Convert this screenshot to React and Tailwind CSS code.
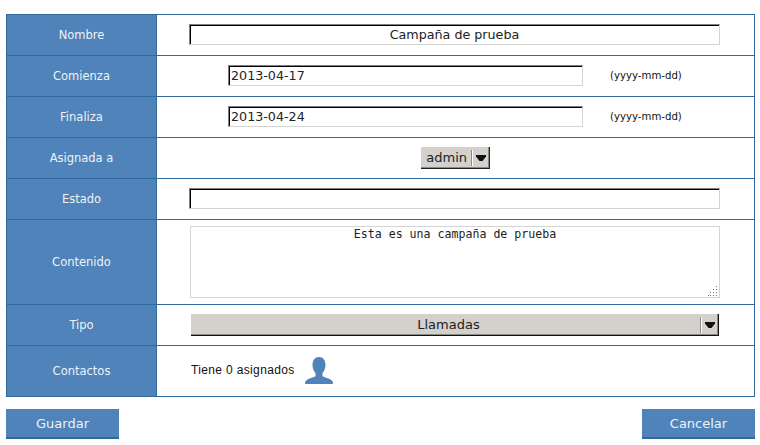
const blue = "bg-[#4f83b9]";

function Row({ label, h = "h-[41px]", last, children }) {
  return (
    <div className={`flex ${h} ${last ? "" : "border-b border-[#2f699f]"}`}>
      <div className={`w-[150px] shrink-0 ${blue} border-r border-[#2f699f] pt-[2px] flex items-center justify-center text-[11.5px] text-[#eef2f7]`}>
        {label}
      </div>
      <div className="flex-1 min-w-0 relative flex items-center">{children}</div>
    </div>
  );
}

const inset = "border border-t-[#808080] border-l-[#808080] border-r-[#d4d4d4] border-b-[#d4d4d4] shadow-[inset_1px_1px_0_#000] outline-none bg-white text-[#222] text-[12.7px] font-['DejaVu_Sans',sans-serif]";

function Arrow() {
  return (
    <span className="flex items-center h-full">
      <span className="w-[1px] h-[16px] bg-white border-l border-[#8a8a8a] box-content" />
      <span className="w-[16px] flex justify-center">
        <svg width="10" height="6" viewBox="0 0 10 6"><path d="M0 0h10v1.500L6.500 6h-3L0 1.500z" fill="#111" /></svg>
      </span>
    </span>
  );
}

function DateRow({ label, value }) {
  return (
    <Row label={label}>
      <input readOnly defaultValue={value} className={`${inset} w-[355px] h-[21px] ml-[71px] mb-[2px] px-[2px]`} />
      <span className="ml-[27px] text-[11.3px] text-[#111] font-['DejaVu_Sans_Condensed','DejaVu_Sans',sans-serif]">(yyyy-mm-dd)</span>
    </Row>
  );
}

export default function App() {
  return (
    <div className="w-[760px] h-[445px] bg-white overflow-hidden pt-[14px] pl-[6px] font-['DejaVu_Sans',sans-serif]">
      <div className="w-[749px] border border-[#2f699f]">
        <Row label="Nombre">
          <input readOnly defaultValue="Campaña de prueba" className={`${inset} w-[531px] h-[21px] ml-[32px] mb-[2px] text-center`} />
        </Row>
        <DateRow label="Comienza" value="2013-04-17" />
        <DateRow label="Finaliza" value="2013-04-24" />
        <Row label="Asignada a">
          <div className="ml-[264px] w-[69px] h-[22px] bg-[#d4d0cc] border-b border-r border-[#222] shadow-[inset_-1px_-1px_0_#8a8a8a] flex items-center justify-end text-[13px] text-[#222]">
            <span className="mr-[4px]">admin</span>
            <Arrow />
          </div>
        </Row>
        <Row label="Estado">
          <input readOnly className={`${inset} w-[531px] h-[21px] ml-[32px] mb-[2px]`} />
        </Row>
        <Row label="Contenido" h="h-[85px]">
          <div className="ml-[33px] w-[530px] h-[72px] relative border border-[#d4d4d4] text-center text-[11.6px] leading-[14px] text-[#222] font-['DejaVu_Sans_Mono',monospace]">
            Esta es una campaña de prueba
            <svg className="absolute right-[1px] bottom-[1px]" width="10" height="10" viewBox="0 0 10 10" fill="#777">
              <rect x="8" y="0" width="1" height="1" /><rect x="8" y="3" width="1" height="1" /><rect x="5" y="3" width="1" height="1" />
              <rect x="8" y="6" width="1" height="1" /><rect x="5" y="6" width="1" height="1" /><rect x="2" y="6" width="1" height="1" />
              <rect x="8" y="9" width="1" height="1" /><rect x="5" y="9" width="1" height="1" /><rect x="2" y="9" width="1" height="1" /><rect x="0" y="9" width="1" height="1" />
            </svg>
          </div>
        </Row>
        <Row label="Tipo">
          <div className="ml-[34px] w-[528px] h-[22px] bg-[#d4d0cc] border-b border-r border-[#111] shadow-[inset_-1px_-1px_0_#8a8a8a] flex items-center text-[13px] text-[#222]">
            <span className="flex-1 text-center pl-[6px]">Llamadas</span>
            <Arrow />
          </div>
        </Row>
        <Row label="Contactos" h="h-[50px]" last>
          <span className="ml-[34px] text-[12px] tracking-[0.35px] text-[#111] font-['Liberation_Sans',sans-serif] -mt-[3px]">Tiene 0 asignados</span>
          <svg className="ml-[10px] mb-[1px]" width="28" height="27" viewBox="0 0 28 27" fill="#4f83b9">
            <path d="M14 0c4 0 6.500 3.200 6.500 7.800 0 3.400-1.200 6.400-3 8.200v3.200c1.800 1.200 5.500 1.900 8 3.200 1.400.8 2.500 2 2.500 3.600 0 .6-.4 1-1 1H1c-.6 0-1-.4-1-1 0-1.600 1.100-2.800 2.500-3.600 2.500-1.300 6.200-2 8-3.200V16c-1.800-1.800-3-4.800-3-8.200C7.500 3.200 10 0 14 0z" />
          </svg>
        </Row>
      </div>
      <div className="w-[749px] flex justify-between mt-[12px]">
        <button className={`w-[113px] h-[30px] ${blue} border-b-2 border-[#2f699f] pt-[2px] text-[13px] text-[#eef2f7]`}>Guardar</button>
        <button className={`w-[113px] h-[30px] ${blue} border-b-2 border-[#2f699f] pt-[2px] text-[13px] text-[#eef2f7]`}>Cancelar</button>
      </div>
    </div>
  );
}
